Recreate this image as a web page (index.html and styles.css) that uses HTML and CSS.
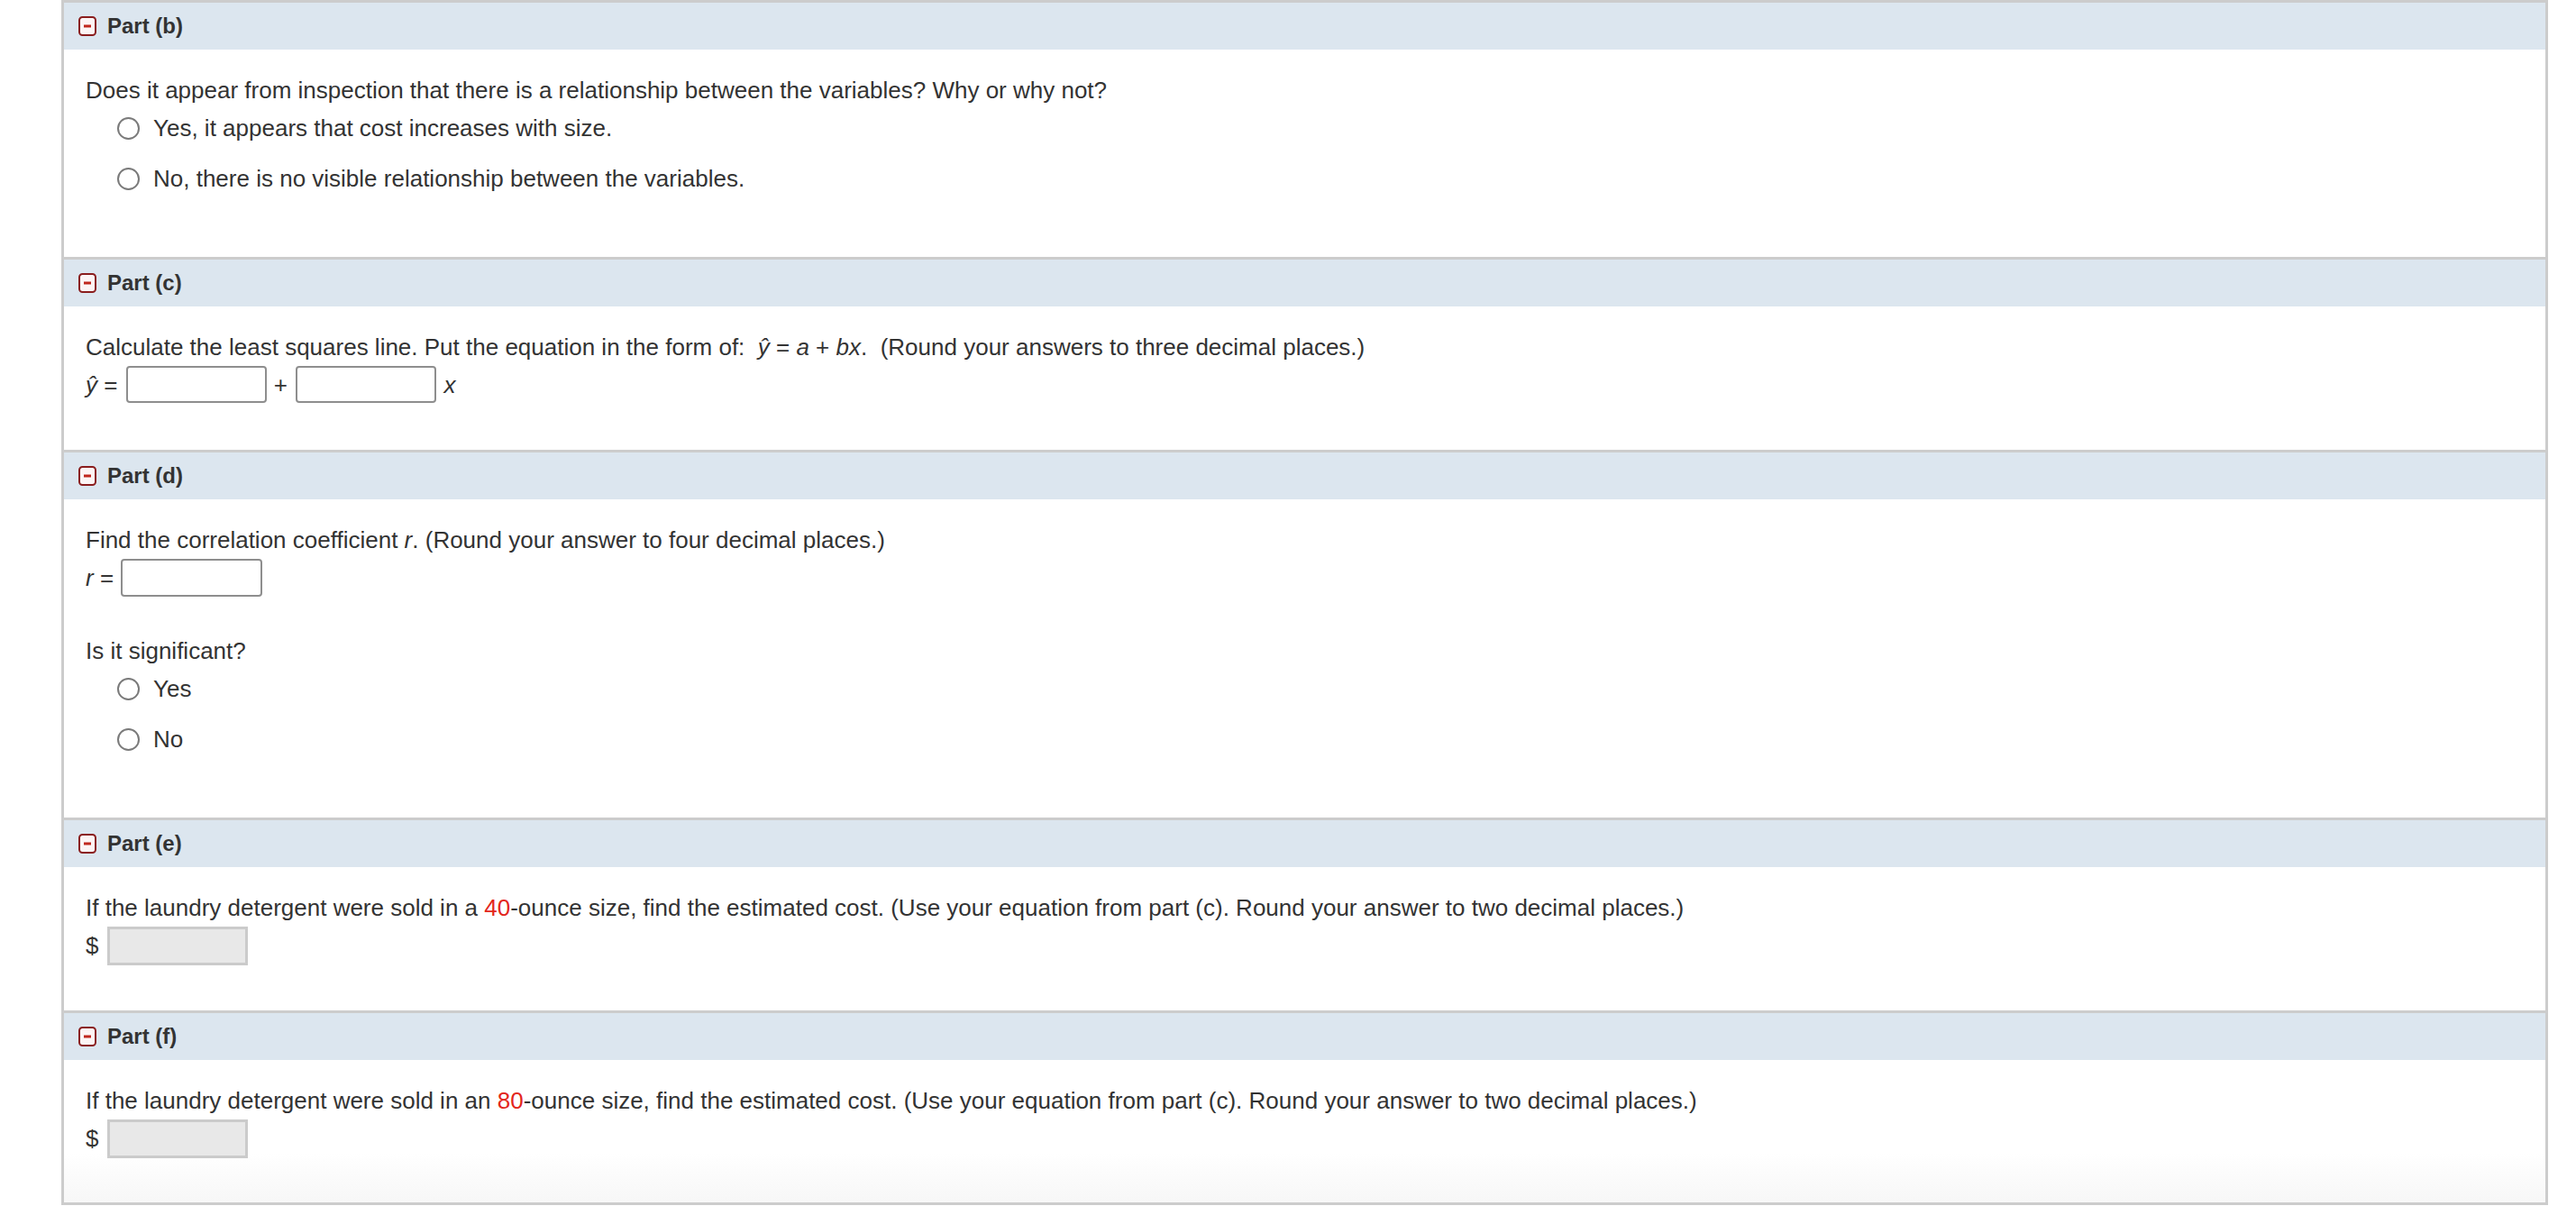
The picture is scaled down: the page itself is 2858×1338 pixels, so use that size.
FILE: index.html
```html
<!DOCTYPE html>
<html>
<head>
<meta charset="utf-8">
<link rel="stylesheet" href="styles.css">
</head>
<body>
<div class="sheet">
  <section class="part">
    <div class="part-head">
      <svg class="toggle" viewBox="0 0 20 22" width="20" height="22"><rect x="1" y="1" width="18" height="20" rx="3.5" ry="3.5" fill="#fdf5f5" stroke="#8a1d1d" stroke-width="2"/><rect x="6" y="9.5" width="8" height="3" fill="#c0281e"/></svg>
      <span class="part-title">Part (b)</span>
    </div>
    <div class="part-body tall">
      <p class="q">Does it appear from inspection that there is a relationship between the variables? Why or why not?</p>
      <div class="choices">
        <label class="choice"><span class="radio"></span><span>Yes, it appears that cost increases with size.</span></label>
        <label class="choice"><span class="radio"></span><span>No, there is no visible relationship between the variables.</span></label>
      </div>
    </div>
  </section>

  <section class="part">
    <div class="part-head">
      <svg class="toggle" viewBox="0 0 20 22" width="20" height="22"><rect x="1" y="1" width="18" height="20" rx="3.5" ry="3.5" fill="#fdf5f5" stroke="#8a1d1d" stroke-width="2"/><rect x="6" y="9.5" width="8" height="3" fill="#c0281e"/></svg>
      <span class="part-title">Part (c)</span>
    </div>
    <div class="part-body">
      <p class="q">Calculate the least squares line. Put the equation in the form of:&nbsp; <i>ŷ</i> = <i>a</i> + <i>bx</i>.&nbsp; (Round your answers to three decimal places.)</p>
      <div class="answer"><i>ŷ</i> = <span class="box"></span> + <span class="box"></span> <i>x</i></div>
    </div>
  </section>

  <section class="part">
    <div class="part-head">
      <svg class="toggle" viewBox="0 0 20 22" width="20" height="22"><rect x="1" y="1" width="18" height="20" rx="3.5" ry="3.5" fill="#fdf5f5" stroke="#8a1d1d" stroke-width="2"/><rect x="6" y="9.5" width="8" height="3" fill="#c0281e"/></svg>
      <span class="part-title">Part (d)</span>
    </div>
    <div class="part-body tall">
      <p class="q">Find the correlation coefficient <i>r</i>. (Round your answer to four decimal places.)</p>
      <div class="answer"><i>r</i> = <span class="box wide"></span></div>
      <p class="q second">Is it significant?</p>
      <div class="choices">
        <label class="choice"><span class="radio"></span><span>Yes</span></label>
        <label class="choice"><span class="radio"></span><span>No</span></label>
      </div>
    </div>
  </section>

  <section class="part">
    <div class="part-head">
      <svg class="toggle" viewBox="0 0 20 22" width="20" height="22"><rect x="1" y="1" width="18" height="20" rx="3.5" ry="3.5" fill="#fdf5f5" stroke="#8a1d1d" stroke-width="2"/><rect x="6" y="9.5" width="8" height="3" fill="#c0281e"/></svg>
      <span class="part-title">Part (e)</span>
    </div>
    <div class="part-body">
      <p class="q">If the laundry detergent were sold in a <span class="num">40</span>-ounce size, find the estimated cost. (Use your equation from part (c). Round your answer to two decimal places.)</p>
      <div class="answer">$ <span class="box locked"></span></div>
    </div>
  </section>

  <section class="part last">
    <div class="part-head">
      <svg class="toggle" viewBox="0 0 20 22" width="20" height="22"><rect x="1" y="1" width="18" height="20" rx="3.5" ry="3.5" fill="#fdf5f5" stroke="#8a1d1d" stroke-width="2"/><rect x="6" y="9.5" width="8" height="3" fill="#c0281e"/></svg>
      <span class="part-title">Part (f)</span>
    </div>
    <div class="part-body">
      <p class="q">If the laundry detergent were sold in an <span class="num">80</span>-ounce size, find the estimated cost. (Use your equation from part (c). Round your answer to two decimal places.)</p>
      <div class="answer">$ <span class="box locked"></span></div>
    </div>
  </section>
</div>
</body>
</html>
```

FILE: styles.css
```css
html, body {
  margin: 0;
  padding: 0;
  background: #ffffff;
}

body {
  font-family: "Liberation Sans", Arial, Helvetica, sans-serif;
  color: #333333;
}

.sheet {
  margin-left: 68px;
  width: 2753px;
  border-left: 3px solid #cccccc;
  border-right: 3px solid #cccccc;
  border-bottom: 3px solid #cccccc;
}

.part {
  border-top: 3px solid #cccccc;
}

.part-head {
  height: 52px;
  background: #dce6ef;
  display: flex;
  align-items: center;
  padding-left: 16px;
  gap: 12px;
}

.toggle {
  display: block;
  flex: none;
}

.part-title {
  font-weight: bold;
  font-size: 24px;
  color: #333333;
}

.part-body {
  padding: 30px 24px 51px 24px;
  font-size: 26px;
}

.part-body.tall {
  padding-bottom: 72px;
}

.part.last .part-body {
  padding-bottom: 50px;
  background: linear-gradient(to bottom, #ffffff 65%, #f7f7f7 100%);
}

.q {
  margin: 0;
  line-height: 30px;
}

.q.second {
  margin-top: 45px;
}

.choices {
  margin-top: 12px;
  margin-left: 35px;
  display: flex;
  flex-direction: column;
  gap: 26px;
}

.choice {
  display: flex;
  align-items: center;
  height: 30px;
  line-height: 30px;
}

.radio {
  box-sizing: border-box;
  width: 25px;
  height: 25px;
  border: 2px solid #7a7a7a;
  border-radius: 50%;
  background: #ffffff;
  margin-right: 15px;
  flex: none;
}

.answer {
  margin-top: 6px;
  height: 42px;
  line-height: 42px;
}

.box {
  display: inline-block;
  vertical-align: top;
  box-sizing: border-box;
  width: 156px;
  height: 41px;
  margin-left: 2px;
  margin-right: 1px;
  border: 2px solid #8e8e8e;
  border-radius: 4px;
  background: #ffffff;
}

.box.wide {
  width: 157px;
  height: 42px;
  margin-left: 1px;
}

.box.locked {
  width: 156px;
  height: 43px;
  margin-left: 2px;
  border: 3px solid #cbcbcb;
  border-radius: 0;
  background: #e8e8e8;
}

.num {
  color: #e3261b;
}
```
